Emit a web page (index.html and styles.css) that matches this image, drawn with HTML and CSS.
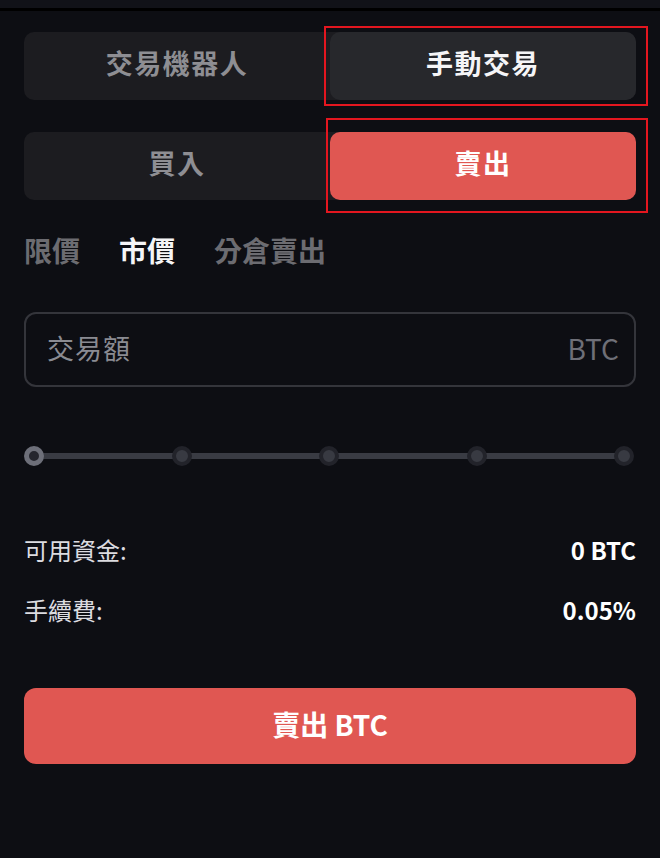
FILE: index.html
```html
<!DOCTYPE html>
<html lang="zh-Hant">
<head>
  <meta charset="UTF-8">
  <meta name="viewport" content="width=device-width, initial-scale=1">
  <title>手動交易</title>
  <link rel="stylesheet" href="styles.css">
</head>
<body>
  <div class="topbar"></div>
  <div class="panel">
    <div class="segment mark-a">
      <button class="seg-btn">交易機器人</button>
      <button class="seg-btn active">手動交易</button>
    </div>

    <div class="segment side mark-b">
      <button class="seg-btn">買入</button>
      <button class="seg-btn sell">賣出</button>
    </div>

    <div class="order-tabs">
      <span class="tab">限價</span>
      <span class="tab current">市價</span>
      <span class="tab">分倉賣出</span>
    </div>

    <label class="amount">
      <input type="text" placeholder="交易額">
      <span class="unit">BTC</span>
    </label>

    <div class="slider">
      <span class="dot first"></span>
      <span class="dot"></span>
      <span class="dot"></span>
      <span class="dot"></span>
      <span class="dot"></span>
    </div>

    <div class="info">
      <div class="info-row"><span>可用資金:</span><b>0 BTC</b></div>
      <div class="info-row"><span>手續費:</span><b>0.05%</b></div>
    </div>

    <button class="submit">賣出 BTC</button>
  </div>
</body>
</html>
```

FILE: styles.css
```css
/* Manual trade panel, dark theme */
body { margin: 0; background: #0d0e13; font-family: "Noto Sans CJK TC", "Noto Sans", sans-serif; color: #f2f2f4; }
.topbar { height: 8px; background: #111218; border-bottom: 3px solid #000; }
.panel { padding: 21px 24px 40px; }

.segment { position: relative; display: grid; grid-template-columns: 1fr 1fr; height: 68px; background: #1c1c20; border-radius: 10px; }
.seg-btn { border: none; background: none; border-radius: 10px; padding: 0 0 7px; font-family: inherit; font-size: 27px; font-weight: 700; color: #8e8e93; letter-spacing: 1.5px; cursor: pointer; }
.seg-btn.active { background: #27282c; color: #f5f5f7; }
.seg-btn.sell { background: #e05752; color: #fff; }
.side { margin-top: 32px; }

/* red review marks around the selected buttons */
.mark-a::after, .mark-b::after { content: ""; position: absolute; border: 2px solid #e3161f; pointer-events: none; }
.mark-a::after { top: -6px; left: 300px; right: -12px; bottom: -6px; }
.mark-b::after { top: -14px; left: 302px; right: -12px; bottom: -13px; }

.order-tabs { display: flex; gap: 39px; margin-top: 32px; height: 36px; align-items: center; }
.tab { font-size: 28px; font-weight: 700; color: #6c6c71; }
.tab.current { color: #f5f5f7; }

.amount { box-sizing: border-box; display: flex; align-items: center; height: 75px; margin-top: 44px; padding: 0 15px 4px 21px; border: 2px solid #34353b; border-radius: 12px; }
.amount input { flex: 1; min-width: 0; border: none; background: none; outline: none; font-family: inherit; font-size: 27px; color: #f2f2f4; letter-spacing: 1px; padding: 0; }
.amount input::placeholder { color: #8a8b92; }
.unit { font-size: 28px; color: #6e6f77; }

.slider { display: flex; justify-content: space-between; align-items: center; height: 20px; margin-top: 59px; padding-right: 2px; background: linear-gradient(#393b43, #393b43) center / calc(100% - 20px) 6px no-repeat; }
.dot { box-sizing: border-box; width: 20px; height: 20px; border-radius: 50%; background: #383a42; border: 4px solid #22232a; }
.dot.first { width: 20px; height: 20px; background: #25262e; border: 5px solid #6d6f79; }

.info { margin-top: 68px; display: flex; flex-direction: column; gap: 30px; }
.info-row { display: flex; justify-content: space-between; align-items: center; height: 30px; font-size: 24px; }
.info-row span { color: #dcdce0; }
.info-row b { color: #fff; font-weight: 700; }

.submit { display: block; width: 100%; height: 76px; margin-top: 64px; padding: 0 0 5px; border: none; border-radius: 12px; background: #e05752; color: #fff; font-family: inherit; font-size: 28px; font-weight: 700; cursor: pointer; }
```
